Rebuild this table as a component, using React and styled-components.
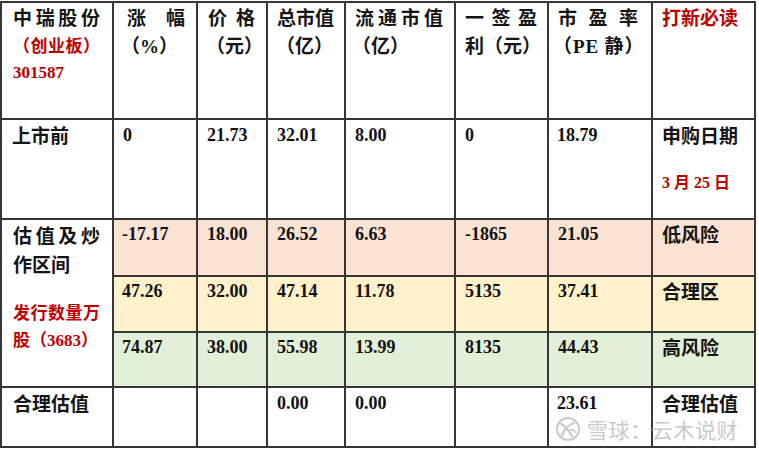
import React from "react";
import styled, { createGlobalStyle } from "styled-components";

const GlobalStyle = createGlobalStyle`
  body {
    margin: 0;
    background: #ffffff;
  }
`;

const RED = "#c00000";
const tones = {
  white: "#ffffff",
  pink: "#fbe3d4",
  yellow: "#fff1cc",
  green: "#e2efd9",
};

const Page = styled.div`
  position: relative;
  width: 759px;
  height: 449px;
  padding-top: 1px;
  box-sizing: border-box;
  overflow: hidden;
`;

const Grid = styled.div`
  display: grid;
  grid-template-columns: 110px 82px 68px 76px 108px 91px 102px 101px;
  grid-template-rows: 115px 98px 55px 54px 53px 58px;
  gap: 2px;
  padding: 2px;
  width: max-content;
  background: #363636;
`;

const Cell = styled.div`
  grid-row: ${(p) => p.$rows || "auto"};
  background: ${(p) => tones[p.$tone || "white"]};
  padding: ${(p) => p.$top ?? 1}px ${(p) => p.$pr ?? 8}px 0 ${(p) => p.$pl ?? 9}px;
  font-family: "Liberation Serif", "Noto Sans CJK SC", serif;
  font-weight: 700;
  font-size: 18px;
  line-height: ${(p) => p.$lh || 28}px;
  color: #111111;
  overflow: visible;
`;

const Han = styled.div`
  font-family: "Noto Sans CJK SC", "Liberation Serif", sans-serif;
  font-size: ${(p) => p.$size || 19}px;
  font-weight: 700;
  line-height: ${(p) => p.$lh || 28}px;
  letter-spacing: ${(p) => p.$ls || 0}px;
  color: ${(p) => (p.$red ? RED : "#151515")};
  white-space: nowrap;
  margin-left: ${(p) => p.$indent || 0}px;
  margin-top: ${(p) => p.$gap || 0}px;
`;

const Spread = styled(Han)`
  white-space: normal;
  text-align: justify;
  text-align-last: justify;
`;

const Num = styled.div`
  font-family: "Liberation Serif", serif;
  font-size: ${(p) => p.$size || 18}px;
  font-weight: 700;
  color: ${(p) => (p.$red ? RED : "#111111")};
  white-space: nowrap;
  margin-top: ${(p) => p.$gap || 0}px;
`;

const Mixed = styled.span`
  font-family: "Liberation Serif", "Noto Sans CJK SC", serif;
`;

const Watermark = styled.div`
  position: absolute;
  left: 554px;
  top: 416px;
  display: flex;
  align-items: center;
  gap: 5px;
  color: #c9c9c9;
  font-family: "Noto Sans CJK SC", sans-serif;
  font-size: 21px;
  font-weight: 400;
  letter-spacing: 0.6px;
  line-height: 20px;
  pointer-events: none;
  text-shadow: 0 0 2px #ffffff, 0 0 1px #ffffff;
`;

function SnowballLogo() {
  return (
    <svg width="28" height="26" viewBox="0 0 28 26" fill="none">
      <circle cx="14" cy="13" r="11" stroke="#c9c9c9" strokeWidth="2" />
      <path d="M7 8 C11 10 15 15 18 20" stroke="#c9c9c9" strokeWidth="2.2" strokeLinecap="round" />
      <path d="M8 19 C10 14 14 9 20 7" stroke="#c9c9c9" strokeWidth="2.2" strokeLinecap="round" />
      <path d="M16 14 C18 13 20 14 21 16" stroke="#c9c9c9" strokeWidth="1.8" strokeLinecap="round" />
    </svg>
  );
}

const rows = [
  { tone: "pink", vals: ["-17.17", "18.00", "26.52", "6.63", "-1865", "21.05"], label: "低风险" },
  { tone: "yellow", vals: ["47.26", "32.00", "47.14", "11.78", "5135", "37.41"], label: "合理区" },
  { tone: "green", vals: ["74.87", "38.00", "55.98", "13.99", "8135", "44.43"], label: "高风险" },
];

export default function App() {
  return (
    <Page>
      <GlobalStyle />
      <Grid>
        {/* header */}
        <Cell $top={0} $pl={11} $pr={12}>
          <Spread>中瑞股份</Spread>
          <Spread $red $size={17}>（创业板）</Spread>
          <Num $red $size={17}>301587</Num>
        </Cell>
        <Cell $top={0} $pl={13} $pr={11}>
          <Spread>涨幅</Spread>
          <Han $indent={-6}>
            （<Mixed>%</Mixed>）
          </Han>
        </Cell>
        <Cell $top={0} $pl={10} $pr={11}>
          <Spread>价格</Spread>
          <Han $indent={-2}>（元）</Han>
        </Cell>
        <Cell $top={0} $pl={9} $pr={10}>
          <Han>总市值</Han>
          <Han $indent={-1}>（亿）</Han>
        </Cell>
        <Cell $top={0} $pl={9} $pr={11}>
          <Spread>流通市值</Spread>
          <Han $indent={-3}>（亿）</Han>
        </Cell>
        <Cell $top={0} $pl={9} $pr={10}>
          <Spread>一签盈</Spread>
          <Han>利（元）</Han>
        </Cell>
        <Cell $top={0} $pl={9} $pr={13}>
          <Spread>市盈率</Spread>
          <Han $indent={-5} $ls={1}>
            （<Mixed>PE</Mixed> 静）
          </Han>
        </Cell>
        <Cell $top={0} $pl={9} $pr={8}>
          <Han $red>打新必读</Han>
        </Cell>

        {/* before listing */}
        <Cell $pl={10}>
          <Han>上市前</Han>
        </Cell>
        <Cell>
          <Num>0</Num>
        </Cell>
        <Cell>
          <Num>21.73</Num>
        </Cell>
        <Cell>
          <Num>32.01</Num>
        </Cell>
        <Cell>
          <Num>8.00</Num>
        </Cell>
        <Cell>
          <Num>0</Num>
        </Cell>
        <Cell $pl={8}>
          <Num>18.79</Num>
        </Cell>
        <Cell>
          <Han>申购日期</Han>
          <Num $red $size={16} $gap={20}>
            3 <Mixed>月</Mixed> 25 <Mixed>日</Mixed>
          </Num>
        </Cell>

        {/* valuation range */}
        {rows.map((r, i) => (
          <React.Fragment key={r.label}>
            {i === 0 && (
              <Cell $rows="span 3" $top={0} $pl={11} $pr={12}>
                <Spread $lh={29}>估值及炒</Spread>
                <Han $lh={29}>作区间</Han>
                <Spread $red $size={17} $lh={27} $gap={20}>
                  发行数量万
                </Spread>
                <Han $red $size={17} $lh={27}>
                  股（<Mixed>3683</Mixed>）
                </Han>
              </Cell>
            )}
            {r.vals.map((v, j) => (
              <Cell key={j} $tone={r.tone} $top={0} $pl={j === 0 ? 8 : 9}>
                <Num>{v}</Num>
              </Cell>
            ))}
            <Cell $tone={r.tone} $top={0}>
              <Han>{r.label}</Han>
            </Cell>
          </React.Fragment>
        ))}

        {/* fair value */}
        <Cell $pl={11} $top={3}>
          <Han $lh={24}>合理估值</Han>
        </Cell>
        <Cell />
        <Cell />
        <Cell $top={3} $lh={24}>
          <Num>0.00</Num>
        </Cell>
        <Cell $top={3} $lh={24}>
          <Num>0.00</Num>
        </Cell>
        <Cell />
        <Cell $pl={8} $top={3} $lh={24}>
          <Num>23.61</Num>
        </Cell>
        <Cell $top={3}>
          <Han $lh={24}>合理估值</Han>
        </Cell>
      </Grid>
      <Watermark>
        <SnowballLogo />
        <span>雪球：云木说财</span>
      </Watermark>
    </Page>
  );
}
